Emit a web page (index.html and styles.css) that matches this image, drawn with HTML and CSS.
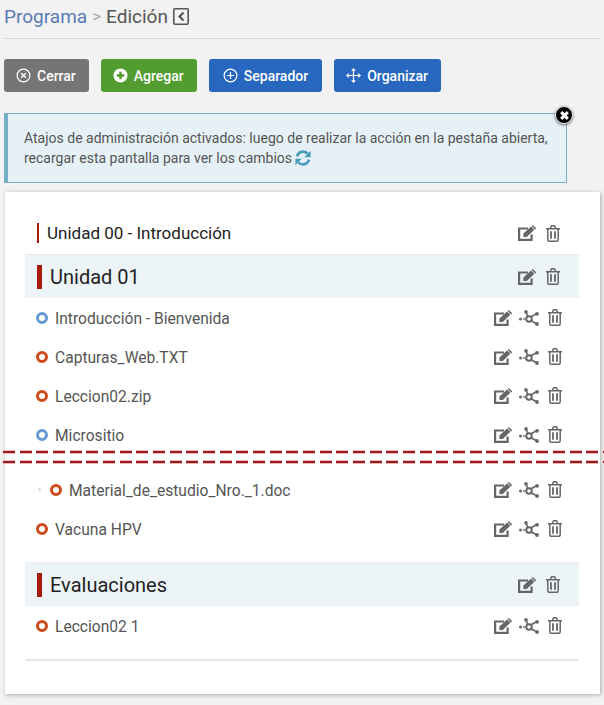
FILE: index.html
```html
<!DOCTYPE html>
<html lang="es">
<head>
    <meta charset="UTF-8">
    <title>Programa - Edición</title>
    <link rel="stylesheet" href="styles.css">
</head>
<body>
    <svg class="defs" width="0" height="0">
        <symbol id="i-edit" viewBox="0 0 18 16">
            <path d="M13.600 9.500V14.900H1.100V3.500H10" fill="none" stroke="currentColor" stroke-width="2.200"/>
            <path d="M5.400 8.600 13 1.400l3.400 3.300-7.600 7.300H5.400z" fill="currentColor"/>
            <path d="M14 .5c.4-.4 1-.4 1.300 0l2.400 2.300c.4.400.4.900 0 1.200l-.5.500-3.500-3.400z" fill="currentColor"/>
        </symbol>
        <symbol id="i-trash" viewBox="0 0 14 17">
            <path d="M0 3.700h14M1.800 4v10.700c0 1 .6 1.500 1.300 1.500h7.800c.7 0 1.300-.5 1.300-1.500V4M4.300 3.500l1-2.400c.1-.3.300-.4.600-.4h2.200c.3 0 .5.100.6.400l1 2.400" fill="none" stroke="currentColor" stroke-width="1.500"/>
            <path d="M5 6.300v7.500M9 6.300v7.500" fill="none" stroke="currentColor" stroke-width="1.800"/>
        </symbol>
        <symbol id="i-nodes" viewBox="0 0 20 16">
            <path d="M9 7 7 2M11.500 7 18 3.500M11.500 10.500 18 14" fill="none" stroke="currentColor" stroke-width="1.600"/>
            <circle cx="10" cy="9" r="2.800" fill="none" stroke="currentColor" stroke-width="2"/>
            <circle cx="1.500" cy="9" r="1.500" fill="currentColor"/>
            <circle cx="5" cy="9" r=".9" fill="currentColor"/>
            <circle cx="7" cy="1.900" r="1.800" fill="currentColor"/>
            <circle cx="18" cy="3.800" r="1.900" fill="currentColor"/>
            <circle cx="18" cy="14" r="1.900" fill="currentColor"/>
        </symbol>
    </svg>

    <div class="breadcrumb">
        <a class="crumb-link" href="#">Programa</a>
        <span class="crumb-sep">&gt;</span>
        <span class="crumb-current">Edición</span>
        <svg class="crumb-back" viewBox="0 0 16 17" width="16" height="17">
            <rect x=".8" y=".8" width="14.400" height="15.400" rx="1" fill="none" stroke="currentColor" stroke-width="1.600"/>
            <path d="M10.500 4.500 6.500 8.500l4 4" fill="none" stroke="currentColor" stroke-width="2.200"/>
        </svg>
    </div>

    <div class="toolbar">
        <a class="btn btn-gray" href="#">
            <svg viewBox="0 0 16 16" width="15" height="15"><circle cx="8" cy="8" r="6.800" fill="none" stroke="currentColor" stroke-width="1.300"/><path d="M5.500 5.500l5 5M10.500 5.500l-5 5" stroke="currentColor" stroke-width="1.500"/></svg>
            Cerrar
        </a>
        <a class="btn btn-green" href="#">
            <svg viewBox="0 0 16 16" width="15" height="15"><circle cx="8" cy="8" r="7.500" fill="currentColor"/><path d="M8 4v8M4 8h8" stroke="#529c30" stroke-width="2.600"/></svg>
            Agregar
        </a>
        <a class="btn btn-blue btn-sep" href="#">
            <svg viewBox="0 0 16 16" width="15" height="15"><circle cx="8" cy="8" r="6.800" fill="none" stroke="currentColor" stroke-width="1.300"/><path d="M8 4.200v7.600M4.200 8h7.600" stroke="currentColor" stroke-width="1.300"/></svg>
            Separador
        </a>
        <a class="btn btn-blue" href="#">
            <svg viewBox="0 0 16 16" width="15" height="15"><path d="M8 1v14M1 8h14" stroke="currentColor" stroke-width="1.300"/><path d="M8 0l2.600 3H5.400zM8 16l2.600-3H5.400zM0 8l3-2.600v5.200zM16 8l-3-2.600v5.200z" fill="currentColor"/></svg>
            Organizar
        </a>
    </div>

    <div class="alert">
        Atajos de administración activados: luego de realizar la acción en la pestaña abierta,
        recargar esta pantalla para ver los cambios<svg class="alert-refresh" viewBox="0 0 16 16" width="16" height="16">
            <path d="M2 6.400A6.200 6.200 0 0 1 12.600 3.700M14 9.600A6.200 6.200 0 0 1 3.400 12.300" fill="none" stroke="currentColor" stroke-width="2.600"/>
            <path d="M15.600 .8v6.400H9.200zM.4 15.200V8.800h6.400z" fill="currentColor"/>
        </svg>
        <span class="alert-close">
            <svg viewBox="0 0 10 10" width="11" height="11"><path d="M2 2l6 6M8 2l-6 6" stroke="#fff" stroke-width="2.800"/></svg>
        </span>
    </div>

    <div class="card">
        <div class="unit-row unit-small">
            <span class="unit-title">Unidad 00 - Introducción</span>
            <span class="actions">
                <svg class="ico-edit"><use href="#i-edit"/></svg>
                <svg class="ico-trash"><use href="#i-trash"/></svg>
            </span>
        </div>

        <div class="unit-row unit-big">
            <span class="unit-title">Unidad 01</span>
            <span class="actions">
                <svg class="ico-edit"><use href="#i-edit"/></svg>
                <svg class="ico-trash"><use href="#i-trash"/></svg>
            </span>
        </div>

        <div class="item">
            <span class="dot dot-blue"></span>
            <span class="item-name">Introducción - Bienvenida</span>
            <span class="actions">
                <svg class="ico-edit"><use href="#i-edit"/></svg>
                <svg class="ico-nodes"><use href="#i-nodes"/></svg>
                <svg class="ico-trash"><use href="#i-trash"/></svg>
            </span>
        </div>
        <div class="item">
            <span class="dot dot-red"></span>
            <span class="item-name">Capturas_Web.TXT</span>
            <span class="actions">
                <svg class="ico-edit"><use href="#i-edit"/></svg>
                <svg class="ico-nodes"><use href="#i-nodes"/></svg>
                <svg class="ico-trash"><use href="#i-trash"/></svg>
            </span>
        </div>
        <div class="item">
            <span class="dot dot-red"></span>
            <span class="item-name">Leccion02.zip</span>
            <span class="actions">
                <svg class="ico-edit"><use href="#i-edit"/></svg>
                <svg class="ico-nodes"><use href="#i-nodes"/></svg>
                <svg class="ico-trash"><use href="#i-trash"/></svg>
            </span>
        </div>
        <div class="item">
            <span class="dot dot-blue"></span>
            <span class="item-name">Micrositio</span>
            <span class="actions">
                <svg class="ico-edit"><use href="#i-edit"/></svg>
                <svg class="ico-nodes"><use href="#i-nodes"/></svg>
                <svg class="ico-trash"><use href="#i-trash"/></svg>
            </span>
        </div>

        <div class="cut"></div>

        <div class="item">
            <span class="bullet"></span>
            <span class="dot dot-red"></span>
            <span class="item-name">Material_de_estudio_Nro._1.doc</span>
            <span class="actions">
                <svg class="ico-edit"><use href="#i-edit"/></svg>
                <svg class="ico-nodes"><use href="#i-nodes"/></svg>
                <svg class="ico-trash"><use href="#i-trash"/></svg>
            </span>
        </div>
        <div class="item">
            <span class="dot dot-red"></span>
            <span class="item-name">Vacuna HPV</span>
            <span class="actions">
                <svg class="ico-edit"><use href="#i-edit"/></svg>
                <svg class="ico-nodes"><use href="#i-nodes"/></svg>
                <svg class="ico-trash"><use href="#i-trash"/></svg>
            </span>
        </div>

        <div class="unit-row unit-big unit-eval">
            <span class="unit-title">Evaluaciones</span>
            <span class="actions">
                <svg class="ico-edit"><use href="#i-edit"/></svg>
                <svg class="ico-trash"><use href="#i-trash"/></svg>
            </span>
        </div>

        <div class="item">
            <span class="dot dot-red"></span>
            <span class="item-name">Leccion02 1</span>
            <span class="actions">
                <svg class="ico-edit"><use href="#i-edit"/></svg>
                <svg class="ico-nodes"><use href="#i-nodes"/></svg>
                <svg class="ico-trash"><use href="#i-trash"/></svg>
            </span>
        </div>

        <div class="card-end"></div>
    </div>
</body>
</html>
```

FILE: styles.css
```css
html, body {
    overflow: hidden;
}
body {
    font-family: Roboto, sans-serif;
    background-color: #f2f2f2;
    margin: 0;
    padding: 0 4px;
    width: 596px;
    height: 705px;
    color: #555;
}
.defs {
    position: absolute;
}
.breadcrumb {
    display: flex;
    align-items: center;
    gap: 5px;
    height: 39px;
    padding-bottom: 6px;
    box-sizing: border-box;
    border-bottom: 1px solid #d8d8d8;
    font-size: 19px;
}
.crumb-link {
    color: #5b7ab8;
    text-decoration: none;
}
.crumb-sep {
    color: #aaa;
    font-size: 17px;
}
.crumb-current {
    color: #555;
}
.crumb-back {
    color: #555;
}
.toolbar {
    display: flex;
    gap: 12px;
    margin-top: 20px;
}
.btn {
    display: flex;
    align-items: center;
    gap: 6px;
    height: 33px;
    padding: 0 13px 0 12px;
    border-radius: 3px;
    color: #fff;
    font-size: 14px;
    font-weight: 500;
    text-decoration: none;
    box-sizing: border-box;
}
.btn-gray {
    background-color: #757575;
}
.btn-green {
    background-color: #529c30;
}
.btn-blue {
    background-color: #2767bf;
}
.btn-sep {
    padding: 0 14px;
}
.alert {
    position: relative;
    width: 563px;
    height: 70px;
    box-sizing: border-box;
    margin-top: 21px;
    padding: 14px 16px 0;
    background-color: #e6f1f7;
    border: 1px solid #76afc6;
    border-left-width: 4px;
    font-size: 14px;
    line-height: 20px;
    color: #555;
}
.alert-refresh {
    color: #4a9cbb;
    margin-left: 3px;
    vertical-align: -3px;
}
.alert-close {
    position: absolute;
    top: -8px;
    right: -7px;
    width: 18px;
    height: 18px;
    box-sizing: border-box;
    display: flex;
    align-items: center;
    justify-content: center;
    background-color: #000;
    border-radius: 50%;
    box-shadow: 0 1px 3px rgba(0, 0, 0, 0.6);
    border: 1px solid #eee;
}
.card {
    position: relative;
    margin: 9px 0 0 1px;
    width: 595px;
    height: 502px;
    box-sizing: border-box;
    padding: 20px 21px 0 20px;
    background-color: #fff;
    box-shadow: 1px 1px 4px rgba(0, 0, 0, 0.3);
}
.unit-row {
    display: flex;
    align-items: center;
    justify-content: space-between;
    padding: 0 19px 0 12px;
    color: #222;
}
.unit-title {
    border-left-style: solid;
    border-left-color: #a81a08;
    display: block;
}
.unit-small {
    height: 42px;
    font-size: 17px;
}
.unit-small .unit-title {
    border-left-width: 2px;
    padding-left: 8px;
    line-height: 20px;
}
.unit-big {
    height: 44px;
    font-size: 20px;
    background-color: #edf4f8;
    border-top: 1px solid #e6eaec;
    box-sizing: border-box;
}
.unit-big .unit-title {
    border-left-width: 5px;
    padding-left: 8px;
    line-height: 24px;
}
.unit-eval {
    margin-top: 14px;
}
.item {
    display: flex;
    align-items: center;
    height: 39px;
    padding: 0 17px 0 11px;
    font-size: 15.6px;
    color: #555;
}
.item-name {
    padding-top: 2px;
}
.dot {
    width: 12px;
    height: 12px;
    box-sizing: border-box;
    border-radius: 50%;
    border-style: solid;
    border-width: 3px;
    margin-right: 7px;
}
.dot-blue {
    border-color: #659ad2;
}
.dot-red {
    border-color: #cf4a1a;
}
.bullet {
    width: 3px;
    height: 3px;
    margin: 0 9px 0 2px;
    background-color: #ddd;
    border-radius: 50%;
}
.actions {
    margin-left: auto;
    display: flex;
    align-items: center;
    gap: 7px;
    color: #666;
}
.unit-row .actions {
    gap: 10px;
}
.ico-edit {
    width: 18px;
    height: 16px;
}
.ico-nodes {
    width: 20px;
    height: 16px;
    margin-right: 2px;
}
.ico-trash {
    width: 14px;
    height: 17px;
}
/* corte de captura: dos lineas de trazos sobre todo el ancho */
.cut {
    height: 16px;
    margin: -4px -25px 4px -22px;
    background-image:
        repeating-linear-gradient(90deg, #961c22 0 12px, transparent 12px 16.67px),
        repeating-linear-gradient(90deg, #961c22 0 12px, transparent 12px 16.67px),
        repeating-linear-gradient(90deg, #f3b9b9 0 12px, transparent 12px 16.67px),
        repeating-linear-gradient(90deg, #f3b9b9 0 12px, transparent 12px 16.67px);
    background-size: 100% 2px, 100% 2px, 100% 4px, 100% 4px;
    background-position: 0 1px, 0 11px, 0 0, 0 10px;
    background-repeat: no-repeat;
}
.card-end {
    margin-top: 14px;
    border-top: 2px solid #e8e8e8;
}
```
